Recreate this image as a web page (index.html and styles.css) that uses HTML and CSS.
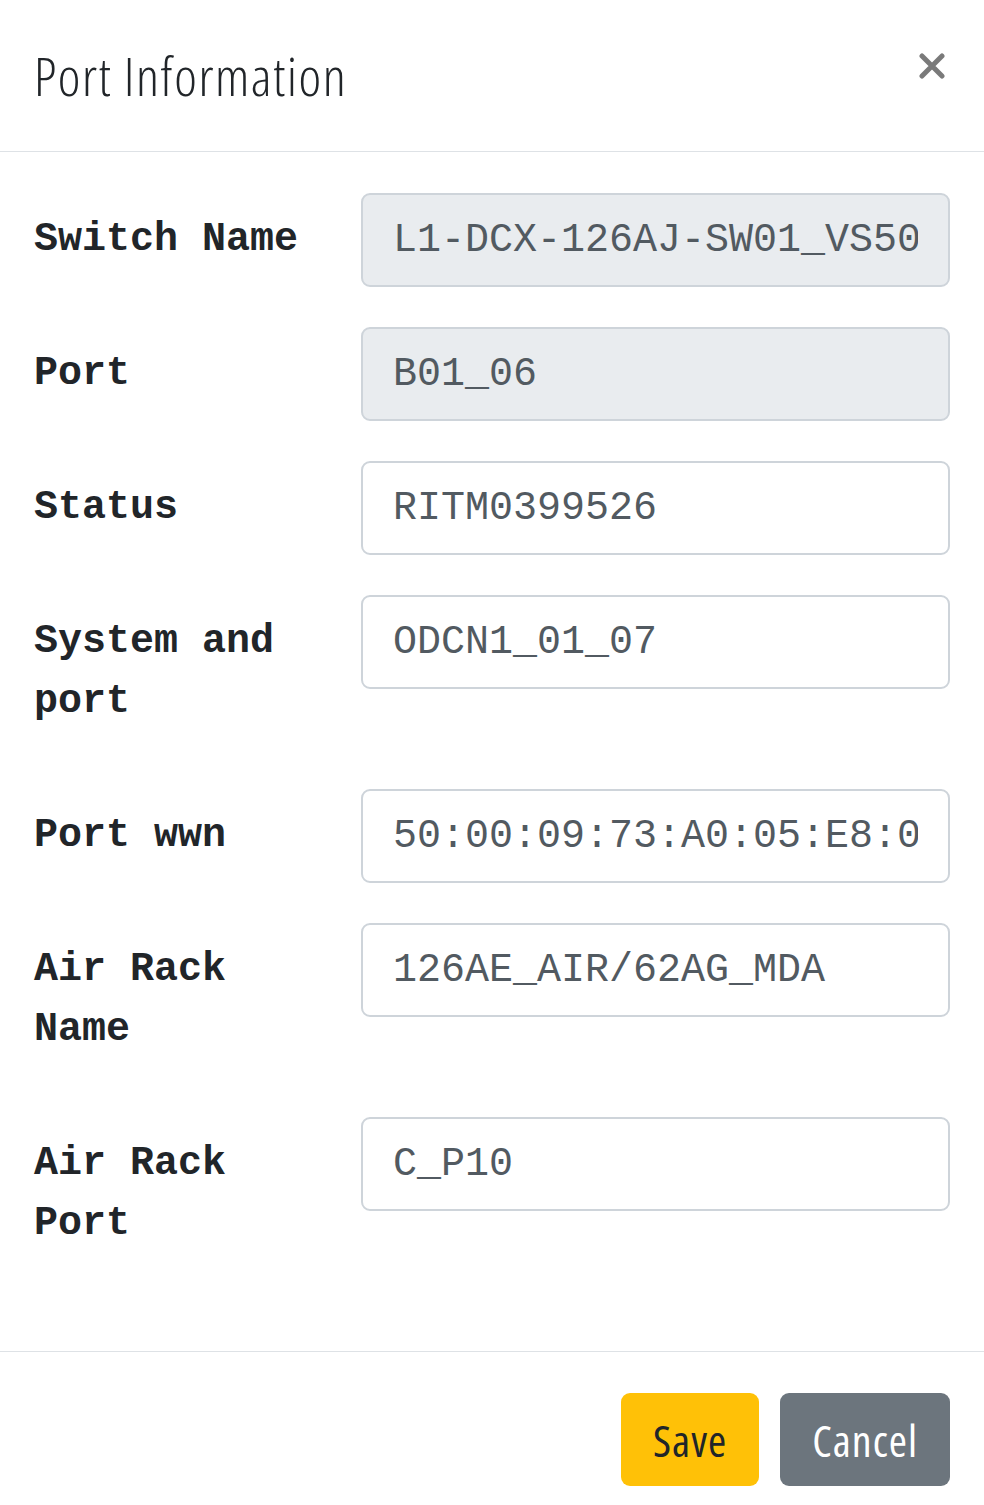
FILE: index.html
```html
<!DOCTYPE html>
<html>
<head>
<meta charset="utf-8">
<link rel="stylesheet" href="styles.css">
</head>
<body>
<div class="modal">
  <div class="modal-header">
    <h5 class="modal-title">Port Information</h5>
    <button class="close" type="button" aria-label="Close">
      <svg width="26" height="26" viewBox="0 0 26 26"><path d="M3 3 L23 23 M23 3 L3 23" stroke="#7a7a7a" stroke-width="5" stroke-linecap="round"/></svg>
    </button>
  </div>
  <div class="modal-body">
    <div class="form-row">
      <label class="form-label">Switch Name</label>
      <input class="form-control" type="text" readonly value="L1-DCX-126AJ-SW01_VS50">
    </div>
    <div class="form-row">
      <label class="form-label">Port</label>
      <input class="form-control" type="text" readonly value="B01_06">
    </div>
    <div class="form-row">
      <label class="form-label">Status</label>
      <input class="form-control editable" type="text" value="RITM0399526">
    </div>
    <div class="form-row">
      <label class="form-label">System and port</label>
      <input class="form-control editable" type="text" value="ODCN1_01_07">
    </div>
    <div class="form-row">
      <label class="form-label">Port wwn</label>
      <input class="form-control editable" type="text" value="50:00:09:73:A0:05:E8:0">
    </div>
    <div class="form-row">
      <label class="form-label">Air Rack Name</label>
      <input class="form-control editable" type="text" value="126AE_AIR/62AG_MDA">
    </div>
    <div class="form-row">
      <label class="form-label">Air Rack Port</label>
      <input class="form-control editable" type="text" value="C_P10">
    </div>
  </div>
  <div class="modal-footer">
    <button class="btn btn-save" type="button">Save</button>
    <button class="btn btn-cancel" type="button">Cancel</button>
  </div>
</div>
</body>
</html>
```

FILE: styles.css
```css
* { box-sizing: border-box; }
html, body { margin: 0; padding: 0; background: #fff; }
body { color: #212529; }

.modal { width: 984px; }

.modal-header {
  display: flex;
  align-items: flex-start;
  justify-content: space-between;
  padding: 38px 34px 38px 34px;
  border-bottom: 1px solid #dee2e6;
}
.modal-title {
  margin: 0;
  font-family: "Open Sans", "Liberation Sans", sans-serif;
  font-stretch: 75%;
  font-weight: 300;
  font-size: 54px;
  letter-spacing: 1.5px;
  line-height: 75px;
  color: #212529;
}
.close {
  margin-top: 15px;
  margin-right: 5px;
  padding: 0;
  border: 0;
  background: transparent;
  width: 26px;
  height: 26px;
  display: block;
}
.close svg { display: block; }

.modal-body {
  padding: 41px 34px 80px 34px;
  display: flex;
  flex-direction: column;
  gap: 40px;
}
.form-row {
  display: grid;
  grid-template-columns: 327px 1fr;
  align-items: start;
}
.form-label {
  font-family: "Courier New", "Liberation Mono", Cousine, "Nimbus Mono PS", monospace;
  font-weight: 700;
  font-size: 40px;
  line-height: 60px;
  padding: 17px 30px 17px 0;
  color: #212529;
}
.form-control {
  display: block;
  width: 100%;
  height: 94px;
  padding: 15px 30px;
  font-family: "Courier New", "Liberation Mono", Cousine, "Nimbus Mono PS", monospace;
  font-size: 40px;
  line-height: 60px;
  color: #525a61;
  background: #e9ecef;
  border: 2px solid #ced4da;
  border-radius: 9px;
  outline: none;
}
.form-control.editable { background: #fff; }

.modal-footer {
  display: flex;
  justify-content: flex-end;
  gap: 21px;
  padding: 41px 34px 40px 34px;
  border-top: 1px solid #dee2e6;
}
.btn {
  height: 93px;
  padding: 0 32px;
  border: 0;
  border-radius: 9px;
  font-family: "Open Sans", "Liberation Sans", sans-serif;
  font-stretch: 75%;
  font-weight: 400;
  font-size: 44px;
  letter-spacing: 1px;
  line-height: 60px;
}
.btn-save { background: #ffc107; color: #212529; }
.btn-cancel { background: #6c757d; color: #fff; }
```
